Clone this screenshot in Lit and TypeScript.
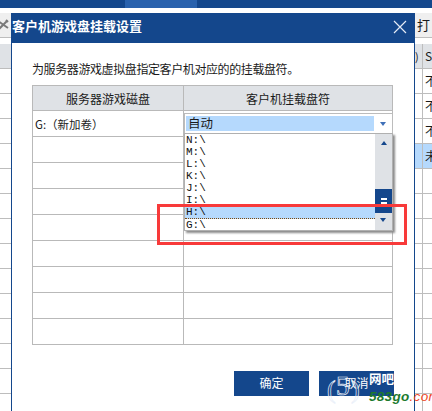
import { LitElement, html, css } from "lit";
import { customElement } from "lit/decorators.js";

const ITEMS = ["N:\\", "M:\\", "L:\\", "K:\\", "J:\\", "I:\\", "H:\\", "G:\\"];

@customElement("app-root")
export class AppRoot extends LitElement {
  static styles = css`
    :host {
      display: block;
      width: 432px;
      height: 411px;
      position: relative;
      overflow: hidden;
      background: #fff;
      font-family: "Noto Sans CJK SC", "Liberation Sans", sans-serif;
      color: #1a1a1a;
    }
    .top { height: 8px; display: flex; background: #14478c; }
    .top .a { width: 125px; }
    .top .b { width: 72px; background: #2a62ad; }
    .bg { display: flex; justify-content: space-between; margin-top: 5px; height: 398px; }
    .side { display: flex; flex-direction: column; overflow: hidden; }
    .left { width: 11px; }
    .right { width: 17px; }
    .tool {
      height: 25px; flex: none; background: #efefef; border-bottom: 1px solid #bdbdbd;
      box-sizing: border-box; font-size: 13px; line-height: 24px; white-space: nowrap; overflow: hidden;
    }
    .tool svg { display: block; margin: 6px 0 0 -3px; }
    .right .tool { padding-left: 2px; }
    .gap { height: 6px; flex: none; }
    .row {
      height: 25px; flex: none; box-sizing: border-box; border-bottom: 1px solid #bdbdbd;
      font-size: 12px; line-height: 24px; white-space: nowrap; overflow: hidden;
    }
    .row.head { height: 25px; background: #dfe2e6; }
    .right .row { display: flex; }
    .right .row .gut { width: 7px; flex: none; border-right: 1px solid #bdbdbd; font-size: 11px; }
    .right .row .cell { padding-left: 2px; }
    .row.sel { background: #b5d9fd; }

    .dialog {
      position: absolute; left: 11px; top: 13px; width: 404px; height: 398px;
      box-sizing: border-box; background: #fff;
      border-left: 1px solid #14478c; border-right: 1px solid #14478c;
      display: flex; flex-direction: column;
    }
    .title {
      height: 30px; flex: none; background: #14478c; color: #fff; font-weight: 700;
      font-size: 13px; line-height: 26px; display: flex; justify-content: space-between;
      padding-right: 7px; box-sizing: border-box;
    }
    .title svg { margin-top: 7px; }
    .body { padding: 0 21px 0 20px; flex: 1; display: flex; flex-direction: column; }
    .hint { font-size: 12px; height: 42px; line-height: 17px; padding-top: 17px; box-sizing: border-box; letter-spacing: -0.4px; white-space: nowrap; }
    table { border-collapse: collapse; width: 361px; table-layout: fixed; }
    td, th {
      border: 1px solid #b9b9b9; padding: 0; font-weight: 400; font-size: 12px;
      box-sizing: border-box;
    }
    th { background: #dfe2e6; height: 25px; text-align: center; }
    td { height: 26px; }
    td.name { padding-left: 2px; font-size: 11.5px; }
    col.c1 { width: 151px; }
    .btns { display: flex; justify-content: flex-end; gap: 10px; margin-top: 26px; margin-right: -1px; }
    .btn { width: 75px; height: 25px; background: #14478c; color: #fff; font-size: 12px; line-height: 23px; text-align: center; }

    .combo {
      position: absolute; left: 184px; top: 113px; width: 209px; height: 20px; box-sizing: border-box;
      background: #fff; border: 1px solid #bcbcbc; border-bottom: 0; padding: 2px 1px;
      display: flex; align-items: flex-start;
    }
    .combo .val { width: 188px; height: 15px; background: #b5d9fd; font-size: 12.5px; line-height: 14px; padding-left: 2px; box-sizing: border-box; }
    .arrow { width: 0; height: 0; border: 3px solid transparent; border-top: 4px solid #3f70b8; border-bottom: 0; border-left-width: 3.5px; border-right-width: 3.5px; }
    .combo .arrow { margin: 6px 0 0 6px; }
    .list {
      position: absolute; left: 184px; top: 133px; width: 209px; height: 98px; box-sizing: border-box;
      background: #fff; border: 1px solid #b0b0b0; display: flex;
      box-shadow: 2px 2px 2px #8c8c8c;
    }
    .items { flex: 1; display: flex; flex-direction: column; min-width: 0; }
    .item {
      height: 12.2px; font: 400 11px/12px "Liberation Mono", monospace; padding-left: 1px;
      color: #111; box-sizing: border-box;
    }
    .item.on { background: #b5d9fd; border-bottom: 1px dotted #7a4a12; border-top: 1px dotted #7a4a12; line-height: 11px; height: 12.5px; }
    .bar { width: 17px; flex: none; background: #dfe2e6; display: flex; flex-direction: column; align-items: center; position: relative; }
    .up { width: 0; height: 0; border: 3.5px solid transparent; border-bottom: 4px solid #14478c; border-top: 0; margin-top: 7px; }
    .thumb { position: absolute; left: 0; top: 55px; width: 17px; height: 24px; background: #14478c; display: flex; flex-direction: column; align-items: center; justify-content: center; gap: 2px; }
    .thumb i { display: block; width: 6px; height: 2px; background: #fff; }
    .down { width: 0; height: 0; border: 3.5px solid transparent; border-top: 4px solid #14478c; border-bottom: 0; position: absolute; top: 84px; left: 5px; }

    .mark { position: absolute; left: 157px; top: 204px; width: 250px; height: 41px; box-sizing: border-box; border: 3px solid #f83a3a; }

    .wm { position: absolute; left: 326px; top: 368px; width: 106px; height: 43px; }
    .g { position: absolute; font-family: "Liberation Serif", serif; line-height: 30px; color: transparent; -webkit-text-stroke: 0.7px #e8eef8; }
    .g.o { left: 1px; top: 7px; font-size: 26px; }
    .g.f { left: 10px; top: 3px; font-size: 27px; }
    .g.c { left: 25px; top: 7px; font-size: 26px; }
    .wang { position: absolute; left: 43px; top: 2px; font-size: 12.5px; font-weight: 700; line-height: 18px; color: #fff; white-space: nowrap; }
    .site { position: absolute; left: 43px; top: 22px; font: italic 700 13.5px/13px "Liberation Sans", sans-serif; color: #1c7a2e; letter-spacing: 0.3px; white-space: nowrap; }
    .site b { color: #ef4a2a; font-weight: 400; }
  `;

  render() {
    const blank = Array.from({ length: 8 });
    const leftRows = Array.from({ length: 14 });
    const rightTexts = ["不", "不", "不", "未"];
    return html`
      <div class="top"><div class="a"></div><div class="b"></div></div>
      <div class="bg">
        <div class="side left">
          <div class="tool">
            <svg width="12" height="12" viewBox="0 0 12 12"><path d="M1 2 L11 9 M10 2 L2 10 M9 1 L11 3" stroke="#7a7a7a" stroke-width="2" fill="none"/></svg>
          </div>
          <div class="gap"></div>
          <div class="row head"></div>
          ${leftRows.map(() => html`<div class="row"></div>`)}
        </div>
        <div class="side right">
          <div class="tool">打</div>
          <div class="gap"></div>
          <div class="row head"><div class="gut">)</div><div class="cell">S:</div></div>
          ${rightTexts.map((t, i) => html`<div class="row ${i === 3 ? "sel" : ""}"><div class="gut"></div><div class="cell">${t}</div></div>`)}
          ${leftRows.slice(0, 10).map(() => html`<div class="row"><div class="gut"></div></div>`)}
        </div>
      </div>

      <div class="dialog">
        <div class="title">
          <span>客户机游戏盘挂载设置</span>
          <svg width="14" height="14" viewBox="0 0 14 14"><path d="M1 1 L13 13 M13 1 L1 13" stroke="#e4ebf5" stroke-width="1.2" fill="none"/></svg>
        </div>
        <div class="body">
          <div class="hint">为服务器游戏虚拟盘指定客户机对应的的挂载盘符。</div>
          <table>
            <colgroup><col class="c1" /><col /></colgroup>
            <tr><th>服务器游戏磁盘</th><th>客户机挂载盘符</th></tr>
            <tr><td class="name">G:（新加卷）</td><td></td></tr>
            ${blank.map(() => html`<tr><td></td><td></td></tr>`)}
          </table>
          <div class="btns"><div class="btn">确定</div><div class="btn">取消</div></div>
        </div>
      </div>

      <div class="combo"><div class="val">自动</div><div class="arrow"></div></div>
      <div class="list">
        <div class="items">
          ${ITEMS.map((t) => html`<div class="item ${t[0] === "H" ? "on" : ""}">${t}</div>`)}
        </div>
        <div class="bar">
          <div class="up"></div>
          <div class="thumb"><i></i><i></i></div>
          <div class="down"></div>
        </div>
      </div>
      <div class="mark"></div>
      <div class="wm">
        <div class="g o">(</div>
        <div class="g f">5</div>
        <div class="g c">)</div>
        <div class="wang">网吧</div>
        <div class="site">583go<b>.com</b></div>
      </div>
    `;
  }
}
